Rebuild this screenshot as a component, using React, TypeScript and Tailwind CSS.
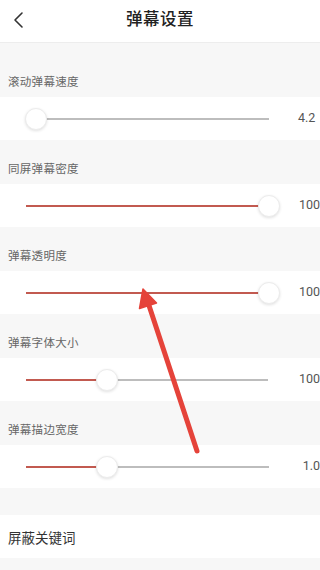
import React from "react";

const font = { fontFamily: '"Noto Sans CJK SC", "Noto Sans", sans-serif' };

function Label({ text, first }: { text: string; first?: boolean }) {
  return (
    <div
      className={
        first
          ? "h-[54px] bg-[#f7f7f7] flex items-end pb-[8px] pl-[8px]"
          : "h-[44px] bg-[#f7f7f7] flex items-end pb-[8px] pl-[8px]"
      }
    >
      <span className="text-[11.5px] leading-[16px] text-[#666] tracking-[0.3px]">{text}</span>
    </div>
  );
}

function SliderRow({
  activeClass,
  thumbClass,
  value,
  valueClass,
}: {
  activeClass: string;
  thumbClass: string;
  value: string;
  valueClass: string;
}) {
  return (
    <div className="h-[43px] bg-white flex items-center">
      <div className="relative ml-[26px] w-[243px] h-[2px] bg-[#bdbdbd]">
        <div className={"absolute left-0 top-0 h-[2px] bg-[#c25a50] " + activeClass} />
        <div
          className={
            "absolute top-[-10px] w-[22px] h-[22px] rounded-full bg-white border border-[#ececec] shadow-[0_1px_3px_rgba(0,0,0,0.12)] " +
            thumbClass
          }
        />
      </div>
      <span
        className={"text-[12.5px] text-[#555] whitespace-nowrap " + valueClass}
        style={{ fontFamily: 'Roboto, "Noto Sans", sans-serif' }}
      >
        {value}
      </span>
    </div>
  );
}

export default function App() {
  return (
    <div className="relative w-[320px] h-[570px] overflow-hidden bg-[#f7f7f7]" style={font}>
      <div className="h-[43px] bg-white border-b border-[#ededed] flex items-center relative">
        <svg className="absolute left-[12px] top-[11px]" width="14" height="18" viewBox="0 0 14 18">
          <path d="M10 2 L3 9 L10 16" fill="none" stroke="#333" strokeWidth="1.6" strokeLinecap="round" strokeLinejoin="round" />
        </svg>
        <div className="flex-1 text-center text-[16.5px] text-[#222] font-medium tracking-[0.5px] -mt-[6px]">
          弹幕设置
        </div>
      </div>

      <Label text="滚动弹幕速度" first />
      <SliderRow activeClass="w-[10px]" thumbClass="left-[-1px]" value="4.2" valueClass="ml-[29px]" />

      <Label text="同屏弹幕密度" />
      <SliderRow activeClass="w-[243px]" thumbClass="left-[232px]" value="100" valueClass="ml-[31px]" />

      <Label text="弹幕透明度" />
      <SliderRow activeClass="w-[243px]" thumbClass="left-[232px]" value="100" valueClass="ml-[31px]" />

      <Label text="弹幕字体大小" />
      <SliderRow activeClass="w-[81px]" thumbClass="left-[70px]" value="100" valueClass="ml-[31px]" />

      <Label text="弹幕描边宽度" />
      <SliderRow activeClass="w-[81px]" thumbClass="left-[70px]" value="1.0" valueClass="ml-[34px]" />

      <div className="h-[27px] bg-[#f7f7f7]" />
      <div className="h-[43px] bg-white flex items-center pl-[8px] pt-[2px]">
        <span className="text-[13.5px] text-[#333]">屏蔽关键词</span>
      </div>

      <svg className="absolute left-0 top-0 pointer-events-none" width="320" height="570" viewBox="0 0 320 570">
        <line x1="197" y1="451" x2="148.5" y2="304" stroke="#e5433a" strokeWidth="5" strokeLinecap="round" />
        <polygon points="143,289 156.5,303 139.5,308.5" fill="#e5433a" stroke="#e5433a" strokeWidth="1.5" strokeLinejoin="round" />
      </svg>
    </div>
  );
}
